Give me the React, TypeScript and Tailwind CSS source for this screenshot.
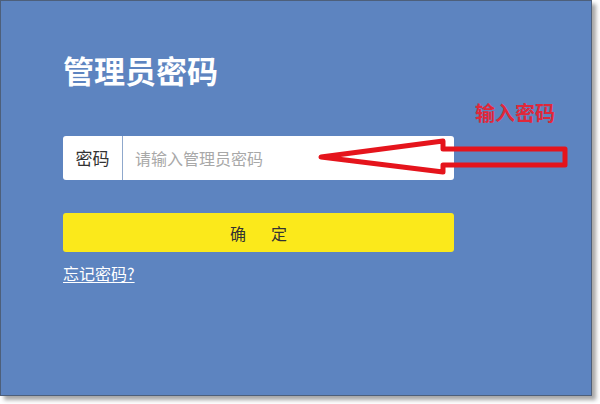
import type { FC } from "react";

const cjk = "font-['Microsoft_YaHei','Noto_Sans_CJK_SC',sans-serif]";

const Arrow: FC = () => (
  <svg
    className="absolute left-0 top-0 pointer-events-none"
    width="600"
    height="404"
    viewBox="0 0 600 404"
  >
    <path
      d="M321 157 L443 141 L443 149 L565 149 L565 165 L443 165 L443 172 Z"
      fill="none"
      stroke="#e5141c"
      strokeWidth="5"
      strokeLinejoin="round"
    />
  </svg>
);

export default function App() {
  return (
    <div className={`relative w-[600px] h-[404px] bg-white overflow-hidden ${cjk}`}>
      <div className="w-[592px] h-[396px] bg-[#5d84c0] border border-[#4d5f7a] shadow-[4px_4px_4px_rgba(0,0,0,0.35)] pl-[62px] pt-[51px]">
        <h1 className="text-[31px] leading-[36px] font-bold text-white">
          管理员密码
        </h1>

        <div className="mt-[48px] flex w-[391px] h-[44px] bg-white rounded-[3px] overflow-hidden">
          <div className="w-[60px] flex items-center justify-center border-r border-[#8fa8cc] text-[17px] text-[#333]">
            密码
          </div>
          <input
            className="flex-1 px-3 text-[16px] text-[#333] placeholder:text-[#a8a8a8] outline-none bg-transparent"
            placeholder="请输入管理员密码"
          />
        </div>

        <button className="mt-[33px] w-[391px] h-[39px] bg-[#fbe91b] rounded-[3px] text-[16px] text-[#333] flex items-center justify-center gap-[25px]">
          <span>确</span>
          <span>定</span>
        </button>

        <a
          href="#"
          className="mt-[11px] block w-fit text-[16px] leading-[21px] text-white underline underline-offset-2"
        >
          忘记密码?
        </a>
      </div>

      <div className="absolute left-[475px] top-[100px] text-[20px] leading-[26px] font-bold text-[#e0283a]">
        输入密码
      </div>
      <Arrow />
    </div>
  );
}
